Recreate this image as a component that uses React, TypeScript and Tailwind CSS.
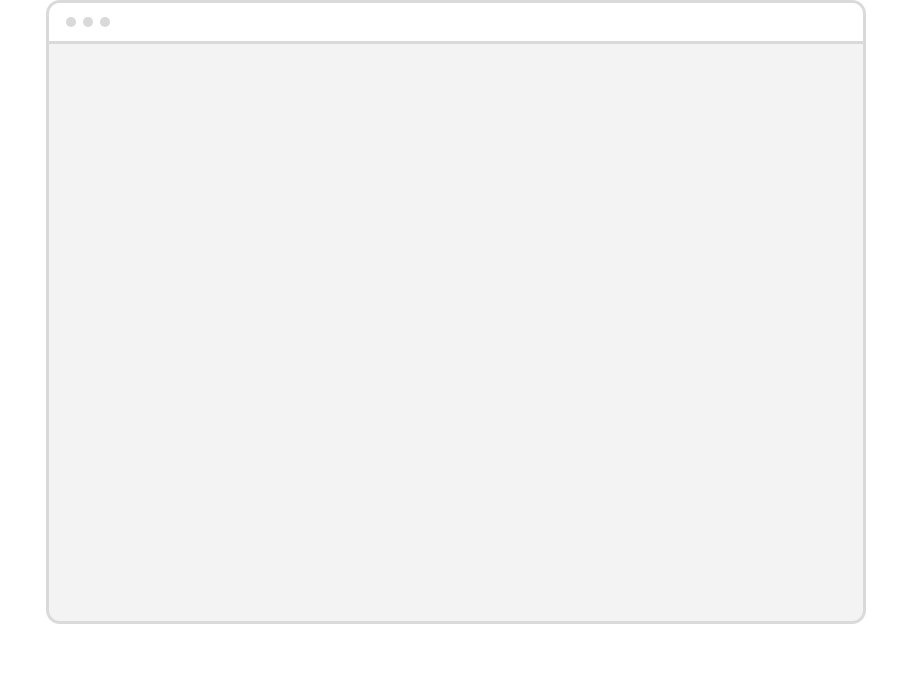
import React from 'react';

const App: React.FC = () => {
  return (
    <div className="min-h-screen bg-white">
      <div className="mx-auto flex h-[624px] w-[820px] flex-col overflow-hidden rounded-[14px] border-[3px] border-[#dadada] bg-[#f3f3f3]">
        {/* Title bar */}
        <div className="flex h-[41px] shrink-0 items-center gap-[7px] border-b-[3px] border-[#dadada] bg-white pl-[17px]">
          <span className="h-[10px] w-[10px] rounded-full bg-[#d9d9d9]" />
          <span className="h-[10px] w-[10px] rounded-full bg-[#d9d9d9]" />
          <span className="h-[10px] w-[10px] rounded-full bg-[#d9d9d9]" />
        </div>
        <div className="flex-1" />
      </div>
    </div>
  );
};

export default App;
